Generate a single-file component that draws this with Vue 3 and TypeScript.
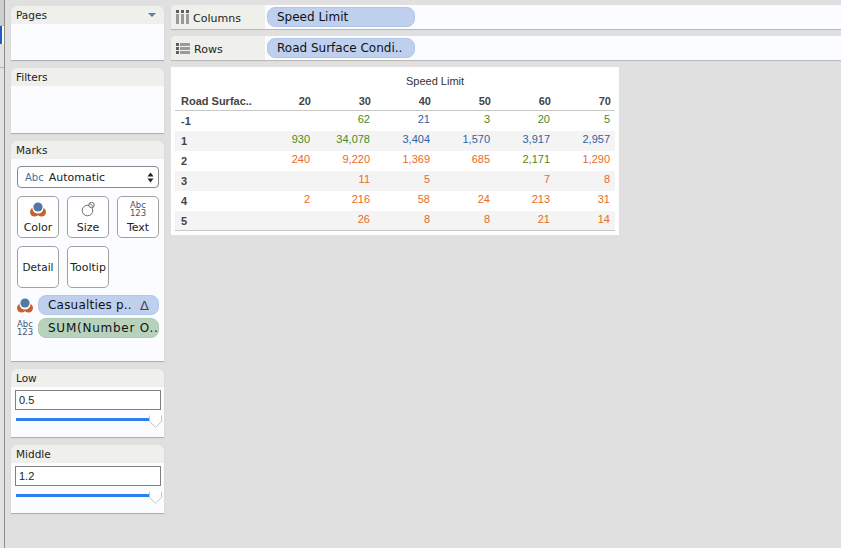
<script setup lang="ts">
const cols = ['20', '30', '40', '50', '60', '70']
type Tone = 'g' | 'b' | 'o' | ''
type Cell = [string, Tone]
const rows: { head: string; cells: Cell[] }[] = [
  { head: '-1', cells: [['', ''], ['62', 'g'], ['21', 'b'], ['3', 'g'], ['20', 'g'], ['5', 'g']] },
  { head: '1', cells: [['930', 'g'], ['34,078', 'g'], ['3,404', 'b'], ['1,570', 'b'], ['3,917', 'b'], ['2,957', 'b']] },
  { head: '2', cells: [['240', 'o'], ['9,220', 'o'], ['1,369', 'o'], ['685', 'o'], ['2,171', 'g'], ['1,290', 'o']] },
  { head: '3', cells: [['', ''], ['11', 'o'], ['5', 'o'], ['', ''], ['7', 'o'], ['8', 'o']] },
  { head: '4', cells: [['2', 'o'], ['216', 'o'], ['58', 'o'], ['24', 'o'], ['213', 'o'], ['31', 'o']] },
  { head: '5', cells: [['', ''], ['26', 'o'], ['8', 'o'], ['8', 'o'], ['21', 'o'], ['14', 'o']] },
]
const params = [
  { name: 'Low', value: '0.5' },
  { name: 'Middle', value: '1.2' },
]
</script>

<template>
  <div class="page">
    <div class="strip">
      <div class="s-top"></div>
      <div class="s-sel"><div class="s-blue"></div></div>
      <div class="s-mid"></div>
      <div class="s-low"></div>
    </div>
    <aside class="side">
      <section class="panel pages">
        <header class="ph">Pages<span class="tri"></span></header>
      </section>
      <section class="panel filters">
        <header class="ph">Filters</header>
      </section>
      <section class="panel marks">
        <header class="ph">Marks</header>
        <div class="select">
          <span class="abc">Abc</span><span class="sel-t">Automatic</span>
          <svg class="updown" width="7" height="11" viewBox="0 0 7 11"><path d="M3.5 0.5 6.5 4.5H0.5ZM3.5 10.5 0.5 6.5H6.5Z" fill="#222" /></svg>
        </div>
        <div class="cards">
          <div class="card">
            <svg class="ci" width="16" height="15" viewBox="0 0 16 15"><circle cx="4.5" cy="10" r="4.5" fill="#c9602b" /><circle cx="11.5" cy="10" r="4.5" fill="#c9602b" /><circle cx="8" cy="6" r="5.6" fill="#fff" /><circle cx="8" cy="5" r="4.6" fill="#4f7aa3" /></svg>
            <span class="cl">Color</span>
          </div>
          <div class="card">
            <svg class="ci" width="16" height="15" viewBox="0 0 16 15" fill="none" stroke="#6a6a6a"><circle cx="7.5" cy="8.5" r="5.3" /><circle cx="11.5" cy="3" r="2.7" fill="#fff" /><path d="M9.7 1.3 13.3 4.7" /></svg>
            <span class="cl">Size</span>
          </div>
          <div class="card">
            <span class="stack"><span>Abc</span><span>123</span></span>
            <span class="cl">Text</span>
          </div>
          <div class="card solo"><span class="cl detail">Detail</span></div>
          <div class="card solo"><span class="cl">Tooltip</span></div>
        </div>
        <div class="fields">
          <div class="field">
            <svg width="16" height="15" viewBox="0 0 16 15"><circle cx="4.5" cy="10" r="4.5" fill="#c9602b" /><circle cx="11.5" cy="10" r="4.5" fill="#c9602b" /><circle cx="8" cy="6" r="5.6" fill="#fbfcff" /><circle cx="8" cy="5" r="4.6" fill="#4f7aa3" /></svg>
            <span class="pill blue fp">Casualties p..<span class="delta">Δ</span></span>
          </div>
          <div class="field">
            <span class="stack small"><span>Abc</span><span>123</span></span>
            <span class="pill green fp wide">SUM(Number O..</span>
          </div>
        </div>
      </section>
      <section v-for="p in params" :key="p.name" class="panel param">
        <header class="ph">{{ p.name }}</header>
        <div class="input">{{ p.value }}</div>
        <div class="slider">
          <div class="track"></div>
          <svg class="thumb" width="13" height="14" viewBox="0 0 13 14"><path d="M0.5 0.5H12.5V7.500L6.500 13.300 0.500 7.500Z" fill="#fff" /><path d="M0.500 1.500V7.500L6.500 13.300 12.500 7.500V1.500" fill="none" stroke="#c4c4c4" /></svg>
        </div>
      </section>
    </aside>
    <main class="main">
      <div class="shelf">
        <div class="shelf-label">
          <svg width="13" height="14" viewBox="0 0 13 14"><path d="M0 4h3v10H0zM5 4h3v10H5zM10 4h3v10h-3z" fill="#9a9a96" /><path d="M0 0h3v3H0zM5 0h3v3H5zM10 0h3v3h-3z" fill="#5e5e5e" /></svg>
          <span>Columns</span>
        </div>
        <div class="shelf-body"><span class="pill blue sp">Speed Limit</span></div>
      </div>
      <div class="shelf">
        <div class="shelf-label">
          <svg width="14" height="11" viewBox="0 0 14 11"><path d="M4 0h10v3H4zM4 4h10v3H4zM4 8h10v3H4z" fill="#9a9a96" /><path d="M0 0h3v3H0zM0 4h3v3H0zM0 8h3v3H0z" fill="#5e5e5e" /></svg>
          <span>Rows</span>
        </div>
        <div class="shelf-body"><span class="pill blue sp">Road Surface Condi..</span></div>
      </div>
      <div class="view">
        <div class="vtitle">Speed Limit</div>
        <div class="grid head">
          <div class="rh">Road Surfac..</div>
          <div v-for="c in cols" :key="c" class="cell hc">{{ c }}</div>
        </div>
        <div v-for="(r, i) in rows" :key="r.head" class="grid row" :class="{ alt: i % 2 === 1 }">
          <div class="rh">{{ r.head }}</div>
          <div v-for="(c, j) in r.cells" :key="j" class="cell" :class="c[1]">{{ c[0] }}</div>
        </div>
      </div>
    </main>
  </div>
</template>

<style>
html, body { margin: 0; background: #e0e0e0; }
</style>

<style scoped>
.page {
  width: 841px;
  height: 548px;
  overflow: hidden;
  display: flex;
  background: #e0e0e0;
  font-family: "DejaVu Sans", sans-serif;
  color: #222;
}
.strip {
  width: 4px;
  flex: none;
  display: flex;
  flex-direction: column;
  border-right: 1px solid #8d8d8d;
}
.s-top { height: 25px; background: #cfcfcf; border-bottom: 1px solid #b5b5b5; }
.s-sel { height: 18px; background: #fff; }
.s-blue { width: 2px; height: 18px; background: #1f5fc4; }
.s-mid { height: 23px; background: #e2e2e2; border-bottom: 1px solid #b9b9b9; }
.s-low { flex: 1; background: #e2e2e2; }
.side {
  width: 153px;
  margin-left: 6px;
  padding-top: 6px;
  display: flex;
  flex-direction: column;
  gap: 8px;
  flex: none;
}
.panel {
  background: #fbfcff;
  border-radius: 7px 7px 0 0;
  box-shadow: 0 1px 1px #a9a9a9;
  flex: none;
}
.ph {
  height: 18px;
  line-height: 18px;
  padding-left: 5px;
  font-size: 10.5px;
  background: #efefeb;
  border-radius: 7px 7px 0 0;
  display: flex;
  justify-content: space-between;
  align-items: center;
}
.tri {
  width: 0;
  height: 0;
  margin-right: 8px;
  border-left: 4px solid transparent;
  border-right: 4px solid transparent;
  border-top: 4px solid #5d7ea6;
}
.pages { height: 54px; }
.filters { height: 65px; }
.marks { height: 220px; }
.select {
  margin: 7px 5px 0 6px;
  height: 22px;
  box-sizing: border-box;
  border: 1px solid #8a8a8a;
  border-radius: 4px;
  background: #fff;
  display: flex;
  align-items: center;
  padding: 0 4px 0 7px;
  font-size: 11px;
}
.abc { color: #46709c; margin-right: 5px; font-size: 10px; }
.sel-t { flex: 1; }
.cards {
  display: grid;
  grid-template-columns: repeat(3, 42px);
  grid-auto-rows: 42px;
  column-gap: 8px;
  row-gap: 8px;
  margin: 8px 0 0 6px;
}
.card {
  box-sizing: border-box;
  border: 1px solid #a0a0a0;
  border-radius: 5px;
  background: #fff;
  display: flex;
  flex-direction: column;
  align-items: center;
  justify-content: flex-end;
  padding-bottom: 3px;
  font-size: 11px;
}
.ci { margin-bottom: 4px; }
.cl { line-height: 13px; white-space: nowrap; }
.card.solo { justify-content: center; padding-bottom: 0; }
.detail { font-size: 10.5px; }
.stack {
  display: flex;
  flex-direction: column;
  align-items: center;
  font-size: 8.5px;
  line-height: 8px;
  color: #44566c;
  margin-bottom: 4px;
}
.stack.small { width: 16px; margin: 0; flex: none; }
.fields {
  margin: 7px 0 0 6px;
  display: flex;
  flex-direction: column;
  gap: 3px;
}
.field { display: flex; align-items: center; gap: 5px; height: 20px; }
.field svg { flex: none; margin-top: 1px; }
.pill {
  display: flex;
  align-items: center;
  box-sizing: border-box;
  border-radius: 8px;
  color: #111;
}
.blue { background: #bed0ee; border: 1px solid #b3c7e8; }
.green { background: #b8d1bb; border: 1px solid #afc9b3; }
.fp {
  width: 121px;
  height: 20px;
  font-size: 12px;
  padding: 0 9px;
  letter-spacing: 0.2px;
  white-space: nowrap;
  justify-content: space-between;
}
.wide { letter-spacing: 0.75px; }
.delta { color: #444; font-size: 13px; }
.param { height: 68px; }
.input {
  margin: 3px 3px 0 4px;
  height: 20px;
  box-sizing: border-box;
  border: 1px solid #808080;
  background: #fff;
  font-family: "Liberation Sans", Arial, sans-serif;
  font-size: 11px;
  line-height: 18px;
  padding-left: 3px;
}
.slider { position: relative; height: 14px; margin: 3px 0 0 5px; }
.track {
  position: absolute;
  left: 0;
  width: 135px;
  top: 5px;
  height: 3px;
  background: #2d7ff0;
}
.thumb { position: absolute; left: 133px; top: 1px; }
.main {
  margin-left: 7px;
  flex: 1;
  min-width: 0;
  padding-top: 5px;
  display: flex;
  flex-direction: column;
}
.shelf {
  display: flex;
  height: 24px;
  margin-bottom: 7px;
  border-radius: 5px 0 0 0;
  background: #fff;
  box-shadow: 0 1px 1px #b5b5b5;
}
.shelf-label {
  width: 94px;
  flex: none;
  box-sizing: border-box;
  padding-left: 5px;
  display: flex;
  align-items: center;
  gap: 4px;
  background: #efefeb;
  border-radius: 5px 0 0 0;
  font-size: 11px;
  color: #222;
}
.shelf-label span { position: relative; top: 1px; }
.shelf-body { flex: 1; padding: 2px 0 0 2px; background: #fbfcff; }
.sp {
  width: 148px;
  height: 20px;
  padding-left: 9px;
  font-size: 12px;
  white-space: nowrap;
}
.view {
  width: 448px;
  height: 168px;
  background: #fff;
  box-sizing: border-box;
  padding: 0 4px;
  font-family: "Liberation Sans", Arial, sans-serif;
}
.vtitle {
  height: 27px;
  line-height: 29px;
  padding-left: 231px;
  font-size: 11px;
  color: #333;
}
.grid {
  display: grid;
  grid-template-columns: 80px repeat(6, 60px);
  font-size: 11px;
  box-sizing: border-box;
}
.head { height: 17px; line-height: 15px; border-bottom: 1px solid #c8c8c8; font-weight: 700; }
.row { height: 20px; line-height: 17px; }
.row:last-child { border-bottom: 1px solid #c8c8c8; }
.alt { background: #f4f4f4; }
.rh { padding-left: 6px; font-weight: 700; color: #444; white-space: nowrap; line-height: 20px; }
.head .rh { line-height: 15px; }
.cell { text-align: right; padding-right: 5px; }
.hc { color: #444; padding-right: 4px; }
.g { color: #4b8a22; }
.b { color: #2f62a6; }
.o { color: #ea6a26; }
</style>
